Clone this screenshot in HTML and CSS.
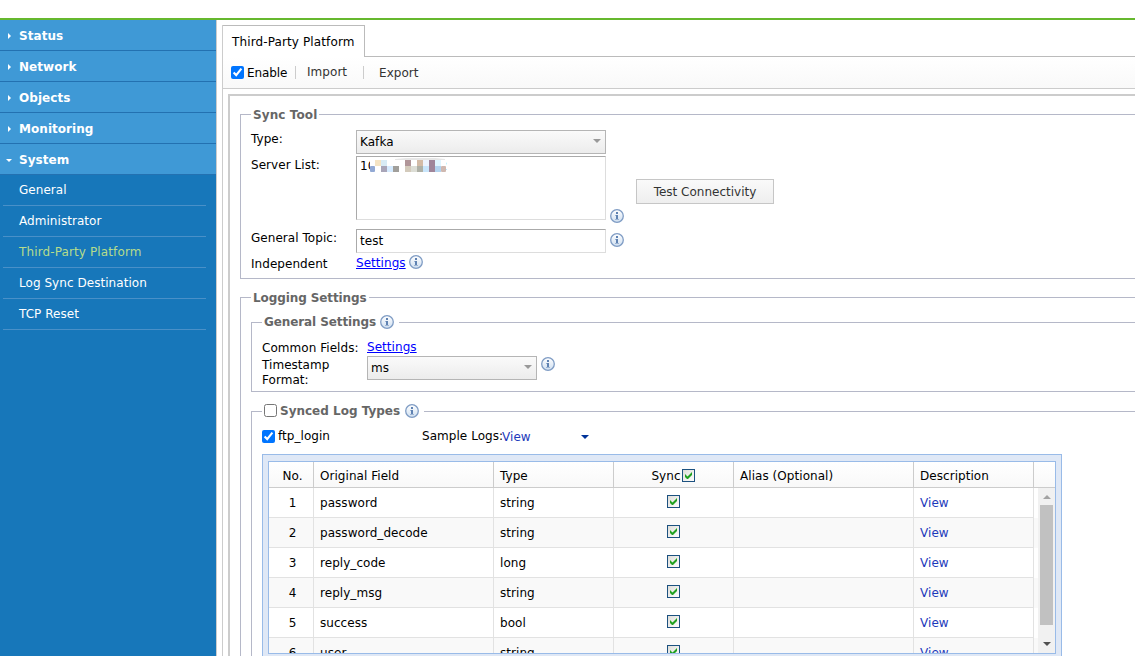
FILE: index.html
```html
<!DOCTYPE html>
<html lang="en">
<head>
  <meta charset="UTF-8">
  <title>Third-Party Platform</title>
  <link rel="stylesheet" href="styles.css">
</head>
<body>
  <svg width="0" height="0" class="defs">
    <defs>
      <linearGradient id="infoFill" x1="0" y1="0" x2="0" y2="1">
        <stop offset="0" stop-color="#ffffff"/>
        <stop offset="1" stop-color="#cfdff0"/>
      </linearGradient>
      <linearGradient id="tickFill" x1="0" y1="0" x2="1" y2="1">
        <stop offset="0" stop-color="#dcdcd7"/>
        <stop offset="1" stop-color="#ffffff"/>
      </linearGradient>
      <symbol id="info" viewBox="0 0 14 14">
        <circle cx="7" cy="7" r="6.3" fill="url(#infoFill)" stroke="#7f9cc4" stroke-width="1.3"/>
        <path d="M6 3h2v2H6zM6 6h2v5H6z" fill="#5f82b2"/>
        <path d="M5 6h1v1H5zM5 10h4v1H5z" fill="#9db4d3"/>
      </symbol>
      <symbol id="tick" viewBox="0 0 13 13">
        <rect x=".5" y=".5" width="12" height="12" fill="url(#tickFill)" stroke="#1c5180"/>
        <path d="M3 5v3l2 2h1l4-4V3L5.500 7.500z" fill="#21a121"/>
      </symbol>
    </defs>
  </svg>

  <div class="topbar"></div>
  <div class="layout">
    <div class="sidebar">
      <div class="menu"><i class="right"></i>Status</div>
      <div class="menu"><i class="right"></i>Network</div>
      <div class="menu"><i class="right"></i>Objects</div>
      <div class="menu"><i class="right"></i>Monitoring</div>
      <div class="menu"><i class="down"></i>System</div>
      <div class="submenu">
        <div>General</div>
        <div>Administrator</div>
        <div class="active">Third-Party Platform</div>
        <div>Log Sync Destination</div>
        <div>TCP Reset</div>
      </div>
    </div>

    <div class="main">
      <div class="tabs">
        <div class="tab">Third-Party Platform</div>
        <div class="tab-rest"></div>
      </div>
      <div class="toolbar">
        <input type="checkbox" checked>
        <span class="enable">Enable</span>
        <span class="import">Import</span>
        <span class="export">Export</span>
      </div>

      <div class="content">
        <fieldset class="sync-tool">
          <legend>Sync Tool</legend>
          <div class="row row-type">
            <label>Type:</label>
            <div class="select">Kafka<i class="caret"></i></div>
          </div>
          <div class="row row-servers">
            <label>Server List:</label>
            <div class="textbox area"><span>10</span><svg class="mask" width="77" height="14">
              <rect width="76" height="14" rx="3" fill="#fff"/>
              <path d="M25 1q27-3 50 0v1H25z" fill="#e6e6e6"/>
              <rect x="0" y="8" width="5" height="6" rx="1" fill="#92a9d4"/>
              <rect x="5" y="2" width="6" height="6" fill="#f5e4c4"/>
              <rect x="11" y="2" width="6" height="6" fill="#d8ebf5"/>
              <rect x="11" y="8" width="6" height="6" fill="#a9a5b8"/>
              <rect x="17" y="8" width="6" height="6" fill="#d6ebff"/>
              <rect x="23" y="8" width="6" height="6" fill="#a19f9b"/>
              <rect x="35" y="2" width="6" height="6" fill="#b09598"/>
              <rect x="35" y="8" width="6" height="6" fill="#d3cabb"/>
              <rect x="41" y="8" width="6" height="6" fill="#dcddd5"/>
              <rect x="47" y="2" width="6" height="6" fill="#d3bba6"/>
              <rect x="47" y="8" width="6" height="6" fill="#aeb0a6"/>
              <rect x="53" y="2" width="6" height="6" fill="#edf3fd"/>
              <rect x="53" y="8" width="6" height="6" fill="#c8e5fb"/>
              <rect x="59" y="2" width="6" height="12" fill="#9f859a"/>
              <rect x="65" y="2" width="6" height="6" fill="#dff5ff"/>
              <rect x="65" y="8" width="6" height="6" fill="#b3d3ef"/>
              <rect x="71" y="8" width="5" height="6" rx="1" fill="#cfb8b0"/>
            </svg><span class="tail">2</span></div>
            <svg class="info"><use href="#info"/></svg>
            <button class="btn">Test Connectivity</button>
          </div>
          <div class="row row-topic">
            <label>General Topic:</label>
            <div class="textbox">test</div>
            <svg class="info"><use href="#info"/></svg>
          </div>
          <div class="row row-independent">
            <label>Independent</label>
            <a href="#">Settings</a>
            <svg class="info"><use href="#info"/></svg>
          </div>
        </fieldset>

        <fieldset class="logging">
          <legend>Logging Settings</legend>

          <fieldset class="general">
            <legend>General Settings<svg class="info"><use href="#info"/></svg></legend>
            <div class="row row-common">
              <label>Common Fields:</label>
              <a href="#">Settings</a>
            </div>
            <div class="row row-time">
              <label>Timestamp<br>Format:</label>
              <div class="select small">ms<i class="caret"></i></div>
              <svg class="info"><use href="#info"/></svg>
            </div>
          </fieldset>

          <fieldset class="types">
            <legend><input type="checkbox">Synced Log Types<svg class="info"><use href="#info"/></svg></legend>
            <div class="row row-login">
              <input type="checkbox" checked>
              <span class="login">ftp_login</span>
              <span class="sample">Sample Logs:</span>
              <span class="view">View</span>
              <i class="arrow"></i>
            </div>

            <div class="grid">
              <div class="grid-inner">
                <div class="grid-row head">
                  <div class="no">No.</div><div>Original Field</div><div>Type</div>
                  <div class="sync">Sync<svg class="tick"><use href="#tick"/></svg></div>
                  <div>Alias (Optional)</div><div>Description</div><div></div>
                </div>
                <div class="grid-body">
                  <div class="rows" id="rows"></div>
                  <div class="scrollbar">
                    <i class="sb-up"></i>
                    <div class="thumb"></div>
                    <i class="sb-down"></i>
                  </div>
                </div>
              </div>
            </div>
          </fieldset>
        </fieldset>
      </div>
    </div>
  </div>

  <script>
    const fields = [
      ['password', 'string'],
      ['password_decode', 'string'],
      ['reply_code', 'long'],
      ['reply_msg', 'string'],
      ['success', 'bool'],
      ['user', 'string']
    ];
    document.getElementById('rows').innerHTML = fields.map((f, i) => `
      <div class="grid-row">
        <div class="no">${i + 1}</div><div>${f[0]}</div><div>${f[1]}</div>
        <div class="sync"><svg class="tick"><use href="#tick"/></svg></div>
        <div></div><div class="link">View</div>
      </div>
    `).join('');
  </script>
</body>
</html>
```
FILE: styles.css
```css
* {
  box-sizing: border-box;
}

body {
  margin: 0;
  height: 656px;
  overflow: hidden;
  background: #fff;
  color: #000;
  font: 12px/15px "DejaVu Sans", Verdana, sans-serif;
  letter-spacing: 0.05px;
}

.defs {
  position: absolute;
}

.topbar {
  height: 20px;
  border-bottom: 2px solid #66b82e;
}

.layout {
  display: flex;
  height: 636px;
}

/* left menu */
.sidebar {
  flex: none;
  width: 217px;
  background: #1777ba;
  border-right: 1px solid #ccc;
  color: #fff;
}

.menu {
  display: flex;
  height: 31px;
  padding-top: 9px;
  background: #3f99d6;
  border-bottom: 1px solid #2371b1;
  font-weight: bold;
}

.menu i {
  width: 19px;
  height: 14px;
  display: flex;
  align-items: center;
}

.menu i::before {
  content: "";
  border: 3px solid transparent;
}

.menu .right::before {
  margin-left: 8px;
  border-left-color: #fff;
  border-right: 0;
}

.menu .down::before {
  margin-left: 6px;
  border-top-color: #fff;
  border-bottom: 0;
}

.submenu {
  width: 203px;
  margin-left: 3px;
}

.submenu div {
  height: 31px;
  padding: 8px 0 0 16px;
  border-bottom: 1px solid #4990c8;
}

.submenu .active {
  color: #b5dc8c;
}

.submenu .active,
.tab {
  letter-spacing: 0.12px;
}

/* tab and toolbar */
.main {
  flex: 1;
  min-width: 0;
  margin: 5px 0 0 5px;
  border-left: 1px solid #ccc;
}

.tabs {
  display: flex;
  height: 32px;
}

.tab {
  width: 142px;
  padding: 9px 0 0 9px;
  border: 1px solid #bbb;
  border-width: 1px 1px 0 0;
  white-space: nowrap;
}

.tab-rest {
  flex: 1;
  border-bottom: 1px solid #bbb;
}

.toolbar {
  display: flex;
  height: 32px;
  padding: 8px 0 0 8px;
  background: linear-gradient(#fff, #f9f9f9);
  border-bottom: 1px solid #ccc;
}

input[type=checkbox] {
  flex: none;
  width: 13px;
  height: 13px;
  margin: 1px 3px 0 0;
}

.enable {
  width: 48px;
  padding-top: 1px;
  letter-spacing: -0.1px;
}

.import,
.export {
  height: 13px;
  border-left: 1px solid #ccc;
  padding-left: 11px;
  margin-top: 1px;
  line-height: 13px;
  color: #333;
}

.import {
  width: 68px;
}

.export {
  padding-left: 15px;
  line-height: 15px;
}

.content {
  width: 1000px;
  height: 700px;
  margin: 5px 0 0 5px;
  padding: 11px 10px;
  border: 2px solid #ccc;
}

fieldset {
  min-width: 0;
  margin: 0;
  padding: 0 0 0 10px;
  border: 1px solid #b5b8c8;
}

legend {
  display: flex;
  height: 15px;
  padding: 0 2px;
  color: #666;
  font-weight: bold;
  line-height: 16px;
  letter-spacing: -0.1px;
}

.sync-tool > legend {
  letter-spacing: 0.1px;
}

.general > legend {
  line-height: 15px;
}

legend .info {
  margin: 0 3px 0 4px;
}

.types > legend {
  line-height: 15px;
  letter-spacing: 0;
}

.types > legend .info {
  margin-left: 5px;
}

.row {
  display: flex;
  align-items: flex-start;
}

label {
  flex: none;
  width: 105px;
}

a {
  color: #00f;
}

.info {
  flex: none;
  width: 14px;
  height: 14px;
  margin-left: 4px;
}

.select,
.textbox {
  width: 250px;
  height: 24px;
  padding: 4px 3px;
  border: 1px solid #b5b5b5;
}

.select {
  display: flex;
  justify-content: space-between;
  background: linear-gradient(#fafafa, #ececec);
}

.select.small {
  width: 170px;
}

.caret {
  width: 0;
  height: 0;
  margin: 4px 1px 0 0;
  border: 4px solid transparent;
  border-top-color: #999;
  border-bottom: 0;
}

.textbox {
  border-color: #aaa #ddd #ddd #aaa;
}

.area {
  display: flex;
  height: 64px;
  padding: 2px 3px;
}

.mask {
  flex: none;
  margin: -1px 0 0 -5px;
  z-index: 1;
}

.tail {
  margin-left: -8px;
}

.btn {
  width: 138px;
  height: 25px;
  margin: 23px 0 0 12px;
  padding: 1px 0 0;
  border: 1px solid #c6c6c6;
  background: linear-gradient(#fafafa, #eee);
  color: #333;
  font: inherit;
}

.sync-tool {
  height: 172px;
}

.row-type {
  padding-top: 8px;
  height: 34px;
}

.row-type label,
.row-servers label,
.row-topic label {
  padding-top: 2px;
}

.row-servers {
  height: 73px;
}

.row-servers .info {
  margin-top: 53px;
}

.row-topic .info {
  margin-top: 4px;
}

.row-independent {
  padding-top: 2px;
}

.row-independent label {
  padding-top: 2px;
}

.row-independent a {
  width: 49px;
  padding-top: 1px;
}

.logging {
  height: 500px;
  margin-top: 11px;
}

.general {
  height: 77px;
  margin-top: 10px;
}

.row-common {
  height: 26px;
  padding-top: 10px;
}

.row-common label {
  padding-top: 1px;
}

.row-time label {
  padding-top: 2px;
}

.row-time .info {
  margin-top: 1px;
}

.types {
  height: 400px;
  margin-top: 12px;
}

.types legend input {
  margin-top: 0;
}

.row-login {
  height: 35px;
  padding-top: 10px;
}

.login {
  width: 144px;
}

.sample {
  width: 80px;
  white-space: nowrap;
}

.view {
  width: 79px;
  padding-top: 1px;
}

.view,
.link {
  color: #1c39bb;
}

.arrow {
  margin-top: 6px;
  border: 4px solid transparent;
  border-top-color: #039;
  border-bottom: 0;
}

/* field table */
.grid {
  width: 800px;
  height: 300px;
  padding: 6px 5px;
  border: 1px solid #99bbe8;
  background: #dfe8f6;
}

.grid-inner {
  width: 788px;
  height: 193px;
  border: 1px solid #99bbe8;
  background: #fff;
  overflow: hidden;
}

.grid-row {
  display: grid;
  grid-template-columns: 45px 180px 120px 120px 180px 120px;
  height: 30px;
}

.grid-row > div {
  padding: 8px 0 0 6px;
  border-right: 1px solid #e2e2e2;
  border-bottom: 1px solid #e2e2e2;
}

.grid-row:nth-child(even) {
  background: #f9f9f9;
}

.grid-row.head {
  grid-template-columns: 45px 180px 120px 120px 180px 120px 1fr;
  height: 26px;
  background: linear-gradient(#fff, #f8f8f8);
}

.grid-row.head > div {
  padding-top: 7px;
  border-color: #ccc;
}

.grid-row.head > div:last-child {
  border-right: 0;
}

.grid-row .no {
  padding-left: 3px;
  text-align: center;
}

.grid-row .sync {
  display: flex;
  justify-content: center;
  padding: 7px 0 0;
}

.head .tick {
  margin: 0 1px;
}

.tick {
  width: 13px;
  height: 13px;
}

.grid-body {
  display: flex;
}

.rows {
  width: 769px;
}

.scrollbar {
  display: flex;
  flex-direction: column;
  align-items: center;
  width: 17px;
  height: 165px;
  background: #f1f1f1;
}

.thumb {
  width: 13px;
  height: 120px;
  background: #c1c1c1;
}

.sb-up,
.sb-down {
  border: 4px solid transparent;
}

.sb-up {
  margin: 7px 0 6px;
  border-top: 0;
  border-bottom-color: #a3a3a3;
}

.sb-down {
  margin-top: 17px;
  border-bottom: 0;
  border-top-color: #505050;
}
```
